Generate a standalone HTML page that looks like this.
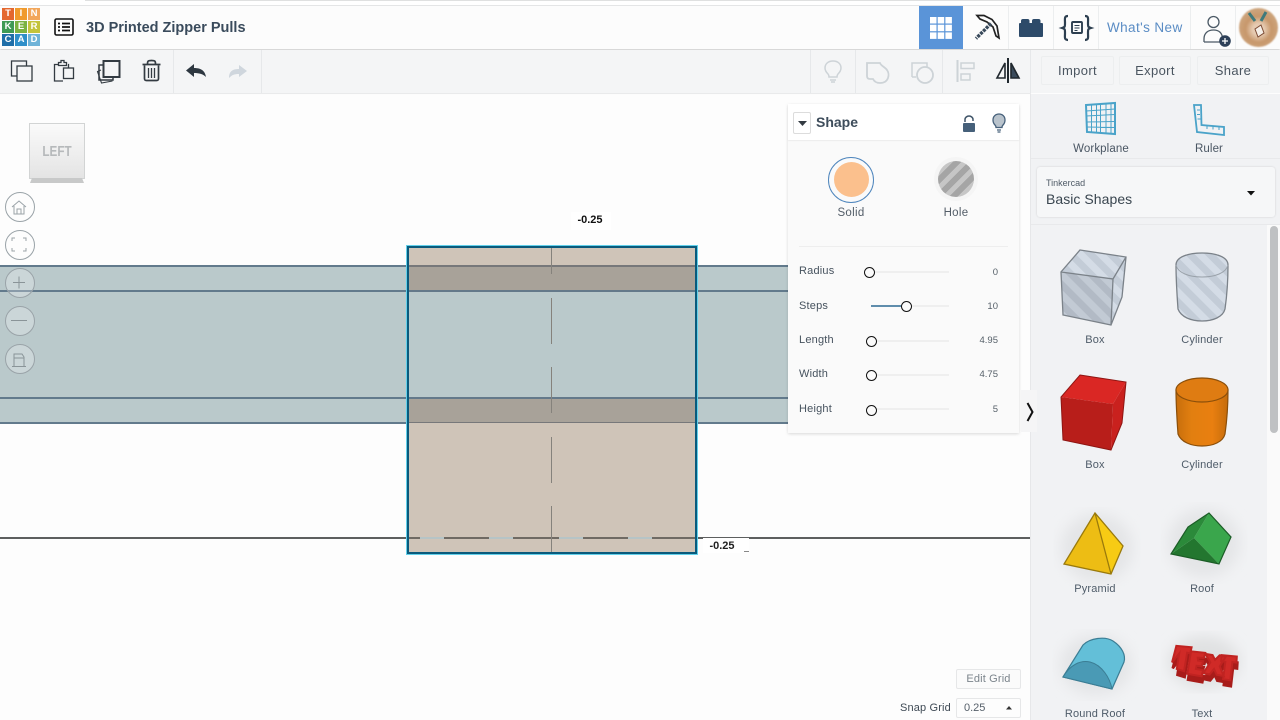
<!DOCTYPE html>
<html><head><meta charset="utf-8">
<style>
html,body{margin:0;padding:0;width:1280px;height:720px;overflow:hidden;background:#fdfdfd;font-family:"Liberation Sans",sans-serif;color:#3c4a58}
.a{position:absolute}
.t{position:absolute;white-space:nowrap;letter-spacing:0}
.c{transform:translateX(-50%)}
svg{position:absolute;overflow:visible}
.sep{position:absolute;width:1px;background:#e6e8ea}
.btn{position:absolute;top:56px;height:29px;background:#f4f5f6;border:1px solid #eceeef;border-radius:2px;box-sizing:border-box;text-align:center;font-size:13px;line-height:28px;color:#4a5560;letter-spacing:.35px}
.lg{position:absolute;width:12px;height:12px;color:#fff;font-size:9.500px;font-weight:bold;line-height:12px;text-align:center}
.track{position:absolute;height:2px;background:#efefef;left:871px;width:78px}
.knob{position:absolute;width:9px;height:9px;border:1.200px solid #111;border-radius:50%;background:#fbfbfb}
.lab{position:absolute;left:799px;font-size:11px;color:#46525e;letter-spacing:.2px}
.val{position:absolute;right:282px;font-size:9.500px;color:#555f68}
.rc{position:absolute;left:5px;width:28px;height:28px;border:1px solid #9aa3a8;border-radius:50%;background:rgba(255,255,255,.25)}
.sl{position:absolute;font-size:11px;color:#4f5c69;white-space:nowrap;transform:translateX(-50%);letter-spacing:.15px}
</style></head><body>
<!-- canvas -->
<div class="a" style="left:0;top:94px;width:1031px;height:626px;background:#fdfdfd"></div>
<div class="a" style="left:0;top:266px;width:790px;height:157px;background:#bac9cb"></div>
<div class="a" style="left:0;top:265px;width:790px;height:2px;background:#627a8c"></div>
<div class="a" style="left:0;top:290px;width:790px;height:2px;background:#627a8c"></div>
<div class="a" style="left:0;top:397px;width:790px;height:2px;background:#627a8c"></div>
<div class="a" style="left:0;top:422px;width:790px;height:2px;background:#627a8c"></div>
<div class="a" style="left:0;top:537px;width:1030px;height:2px;background:#5d5f5f"></div>
<!-- selected shape -->
<div class="a" style="left:408px;top:248px;width:288px;height:306px;background:#cfc4b8"></div>
<div class="a" style="left:408px;top:291px;width:288px;height:107px;background:#bac9cb"></div>
<div class="a" style="left:408px;top:266px;width:288px;height:25px;background:#a8a299"></div>
<div class="a" style="left:408px;top:398px;width:288px;height:25px;background:#a8a299"></div>
<div class="a" style="left:408px;top:265px;width:288px;height:2px;background:#77787a"></div>
<div class="a" style="left:408px;top:290px;width:288px;height:2px;background:#64798a"></div>
<div class="a" style="left:408px;top:397px;width:288px;height:2px;background:#64798a"></div>
<div class="a" style="left:408px;top:422px;width:288px;height:1px;background:#77787a"></div>
<div class="a" style="left:408px;top:537px;width:288px;height:2px;background:#6f6a63"></div>
<div class="a" style="left:420px;top:537px;width:24px;height:2px;background:#b6c4c6"></div>
<div class="a" style="left:489px;top:537px;width:24px;height:2px;background:#b6c4c6"></div>
<div class="a" style="left:559px;top:537px;width:24px;height:2px;background:#b6c4c6"></div>
<div class="a" style="left:628px;top:537px;width:24px;height:2px;background:#b6c4c6"></div>
<svg style="left:0;top:0" width="1280" height="720">
<path d="M551.500 248V274M551.500 298V344M551.500 367V413M551.500 437V483M551.500 506V554" stroke="#85827c" stroke-width="1" fill="none"/>
</svg>
<div class="a" style="left:407px;top:246px;width:286px;height:304px;border:2px solid #0a5a7c;box-shadow:0 0 0 1px #62d0ea"></div>
<div class="a" style="left:571px;top:212px;width:40px;height:18px;background:#fff"></div>
<div class="t c" style="left:590px;top:214px;font-size:11px;font-weight:bold;color:#111">-0.25</div>
<div class="a" style="left:703px;top:538px;width:46px;height:15px;background:#fff"></div>
<div class="t c" style="left:722px;top:540px;font-size:11px;font-weight:bold;color:#222">-0.25</div>
<div class="a" style="left:744px;top:551px;width:5px;height:1px;background:#888"></div>

<!-- view cube -->
<div class="a" style="left:29px;top:123px;width:56px;height:56px;background:linear-gradient(#fafafa,#e4e4e4);border:1px solid #d2d4d4;box-sizing:border-box"></div>
<svg style="left:29px;top:178px" width="56" height="6"><path d="M3 0h50l2 5H1z" fill="#c8c9c9"/></svg>
<div class="t c" style="left:57px;top:143px;font-size:15px;font-weight:bold;color:#b6b9bb;transform:translateX(-50%) scaleX(.78)">LEFT</div>
<div class="rc" style="top:192px"></div><div class="rc" style="top:230px"></div><div class="rc" style="top:268px"></div><div class="rc" style="top:306px"></div><div class="rc" style="top:344px"></div>
<svg style="left:0;top:0" width="60" height="380" fill="none" stroke="#9aa3a8" stroke-width="1">
<path d="M12 207l7-6 7 6M14 206v8h10v-8M17 214v-5h4v5"/>
<path d="M12 241v-3h3M23 238h3v3M12 248v3h3M23 251h3v-3"/>
<path d="M13 282.500h12M19 276.500v12" stroke="#8a9498"/>
<path d="M11 320.500h16" stroke="#8a9498"/>
<path d="M12 366.500h14M14 366v-12h8l2 3v9M14 358h10" stroke="#8a9498"/>
</svg>

<!-- top nav -->
<div class="a" style="left:0;top:0;width:1280px;height:6px;background:#fff"></div>
<div class="a" style="left:85px;top:0;width:1195px;height:1px;background:#dfe0e0"></div>
<div class="a" style="left:0;top:5px;width:1280px;height:1px;background:#e8e9ea"></div>
<div class="a" style="left:0;top:6px;width:1280px;height:43px;background:#fcfcfc;box-shadow:0 1px 2px rgba(0,0,0,.22)"></div>
<div class="lg" style="left:2px;top:8px;background:#e4672e">T</div><div class="lg" style="left:15px;top:8px;background:#f09a2c">I</div><div class="lg" style="left:28px;top:8px;background:#f2a65a">N</div>
<div class="lg" style="left:2px;top:21px;background:#3f9a55">K</div><div class="lg" style="left:15px;top:21px;background:#7cb342">E</div><div class="lg" style="left:28px;top:21px;background:#c4c43c">R</div>
<div class="lg" style="left:2px;top:34px;background:#1f6ea8">C</div><div class="lg" style="left:15px;top:34px;background:#2f8fc9">A</div><div class="lg" style="left:28px;top:34px;background:#6fb3d8">D</div>
<svg style="left:54px;top:18px" width="20" height="18" fill="none" stroke="#111"><rect x="1" y="1" width="18" height="16" rx="1.500" stroke-width="1.600"/><path d="M4 5.500h2M8 5.500h8M4 9h2M8 9h8M4 12.500h2M8 12.500h8" stroke-width="1.800"/></svg>
<div class="t" style="left:86px;top:20px;font-size:14.500px;font-weight:bold;color:#3a4b5c">3D Printed Zipper Pulls</div>

<div class="a" style="left:919px;top:6px;width:44px;height:43px;background:#5a94d8"></div>
<svg style="left:930px;top:17px" width="22" height="22" fill="#fff"><rect width="6.500" height="6.500"/><rect x="7.700" width="6.500" height="6.500"/><rect x="15.400" width="6.500" height="6.500"/><rect y="7.700" width="6.500" height="6.500"/><rect x="7.700" y="7.700" width="6.500" height="6.500"/><rect x="15.400" y="7.700" width="6.500" height="6.500"/><rect y="15.400" width="6.500" height="6.500"/><rect x="7.700" y="15.400" width="6.500" height="6.500"/><rect x="15.400" y="15.400" width="6.500" height="6.500"/></svg>
<svg style="left:972px;top:14px" width="30" height="28" fill="none" stroke="#222"><path d="M5 1.500h7l8 4 5 6.500 2 12-3-2-3-9-6-5-7-3z" stroke-width="1.700"/><path d="M19 9.500L4 24.500" stroke="#3a4b5c" stroke-width="3.400" stroke-dasharray="3 1"/></svg>
<svg style="left:1019px;top:19px" width="24" height="18" fill="#2d4a69"><rect x="0" y="4" width="24" height="14" rx="1"/><rect x="2" y="0" width="8.500" height="6" rx="2"/><rect x="13" y="0" width="8.500" height="6" rx="2"/></svg>
<svg style="left:1061px;top:15px" width="31" height="26" fill="none" stroke="#2d3f50" stroke-width="2.200"><path d="M7 1C3 1 4 4 4 8s0 4-3 5c3 1 3 1 3 5s-1 7 3 7M24 1c4 0 3 3 3 7s0 4 3 5c-3 1-3 1-3 5s1 7-3 7"/><rect x="11" y="7" width="10" height="11" rx="1" stroke-width="1.900"/><path d="M13.500 10.500h5M13.500 13h5M13.500 15.500h3" stroke-width="1"/></svg>
<div class="t" style="left:1107px;top:20px;font-size:13.500px;color:#5a8cc4;letter-spacing:.4px">What's New</div>
<svg style="left:1202px;top:15px" width="32" height="32" fill="none" stroke="#4c5a66" stroke-width="1.300"><circle cx="11.500" cy="7" r="5.500"/><path d="M2 27v-3c0-6 4-9 9.500-9s9 3 9 9v1M2 27h17"/><circle cx="23" cy="26" r="5.800" fill="#2d4058" stroke="none"/><path d="M20 26h6M23 23v6" stroke="#fff"/></svg>
<div class="a" style="left:1239px;top:8px;width:39px;height:39px;border-radius:50%;filter:blur(.7px);background:radial-gradient(circle at 50% 55%,#e6cbb2 0 20%,#c7976b 45%,#cfa983 78%,#dcc2a4 100%)"></div>
<svg style="left:1239px;top:8px" width="39" height="39" fill="none"><path d="M10 5l6 8M27 4l-5 9" stroke="#3f7a7c" stroke-width="3"/><path d="M16 21l6-4 3 8-6 4z" fill="#f5efe8" stroke="#7b4a33"/></svg>
<div class="sep" style="left:1008px;top:6px;height:43px;background:#eceeef"></div>
<div class="sep" style="left:1053px;top:6px;height:43px;background:#eceeef"></div>
<div class="sep" style="left:1098px;top:6px;height:43px;background:#eceeef"></div>
<div class="sep" style="left:1190px;top:6px;height:43px;background:#eceeef"></div>
<div class="sep" style="left:1235px;top:6px;height:43px;background:#eceeef"></div>

<!-- toolbar -->
<div class="a" style="left:0;top:50px;width:1031px;height:43px;background:#f4f5f6;box-shadow:0 1px 1px rgba(0,0,0,.04)"></div>
<div class="a" style="left:1031px;top:50px;width:249px;height:43px;background:#f4f5f6"></div>
<div class="a" style="left:0;top:93px;width:1031px;height:1px;background:#e9eaeb"></div>
<div class="sep" style="left:173px;top:50px;height:43px"></div>
<div class="sep" style="left:261px;top:50px;height:43px"></div>
<div class="sep" style="left:810px;top:50px;height:43px"></div>
<div class="sep" style="left:855px;top:50px;height:43px"></div>
<div class="sep" style="left:942px;top:50px;height:43px"></div>
<div class="sep" style="left:1030px;top:50px;height:43px"></div>
<svg style="left:0;top:50px" width="270" height="43" fill="none" stroke="#333b42" stroke-width="1.300">
<path d="M17 26H11.500V11h15v5"/><rect x="17" y="16" width="15" height="15"/>
<path d="M63 31H54.500V14.500H58M68 14.500h.500V18"/><path d="M58.500 15.500v-3h2.500v-2h3v2h2.500v3z"/><rect x="63.500" y="18" width="10" height="10.500"/>
<path d="M101 20l-3.500 1.500 4 11.500 11-2" stroke-width="1.100"/><rect x="103.500" y="11" width="16" height="16" stroke-width="2"/><path d="M103 15h-4v15h14v-3" stroke-width="1.500"/>
<path d="M142.500 14.500h18M147.500 14c0-3 .5-3.500 4-3.500s4 .5 4 3.500M144.500 15.500v13c0 1.500.5 2 2 2h10c1.500 0 2-.5 2-2v-13" stroke-width="1.700"/><path d="M148.500 18v10M151.500 18v10M154.500 18v10"/>
</svg>
<svg style="left:186px;top:64px" width="21" height="14"><path d="M0 6.500L8 0v4c6 0 11 2 12 9-3-3-7-4-12-4v4z" fill="#2d3740"/></svg>
<svg style="left:229px;top:65px" width="20" height="14"><path d="M18 6L10 0v4C4 4 0 6 0 13c3-3 5-4 10-4v3z" fill="#cfd6dd"/></svg>
<svg style="left:810px;top:50px" width="220" height="43" fill="none" stroke="#cdd3d7" stroke-width="1.500">
<path d="M18 25c-2-2-3-4-3-6 0-4 3-7 8-7s8 3 8 7c0 2-1 4-3 6-1 1-1 2-1 3h-8c0-1 0-2-1-3zM20 31h6M21 33h4" transform="translate(0 -1)"/>
<path d="M57 13h13c1 3 5 4 7 7 3 4 2 13-7 13-4 0-6-2-7-4H60c-2 0-3-1-3-3z" stroke-width="1.800"/>
<path d="M102 27V13h15v4M102 27h4" stroke-width="1.500"/><circle cx="115" cy="25" r="8" stroke-width="1.800"/>
<path d="M147.500 10v22" stroke-width="2"/><rect x="151" y="13" width="13" height="5.500"/><rect x="151" y="24" width="9" height="6"/>
</svg>
<svg style="left:995px;top:58px" width="26" height="26" fill="none" stroke="#20282e" stroke-width="1.600"><path d="M13 0v25" stroke-width="2"/><path d="M10 5L2 20h8z"/><path d="M16 5l8 15h-8z" fill="#3a4b5c"/></svg>
<div class="btn" style="left:1041px;width:73px">Import</div>
<div class="btn" style="left:1119px;width:72px">Export</div>
<div class="btn" style="left:1197px;width:72px">Share</div>

<!-- inspector -->
<div class="a" style="left:788px;top:104px;width:231px;height:329px;background:#fafafa;box-shadow:0 1px 3px rgba(0,0,0,.15)"></div>
<div class="a" style="left:788px;top:104px;width:231px;height:36px;background:#fff;box-shadow:0 1px 1px rgba(0,0,0,.06)"></div>
<div class="a" style="left:793px;top:112px;width:18px;height:22px;border:1px solid #dcdcdc;border-radius:2px;box-sizing:border-box"></div>
<svg style="left:798px;top:121px" width="9" height="6"><path d="M0 0h9L4.500 5z" fill="#333b42"/></svg>
<div class="t" style="left:816px;top:114px;font-size:14px;font-weight:bold;color:#3e4d5b">Shape</div>
<svg style="left:962px;top:115px" width="14" height="17"><path d="M3 7V4.500C3 2.500 5 1 7 1s4 1.500 4 3.500V6" fill="none" stroke="#3f5468" stroke-width="1.500"/><rect x="1" y="8" width="12" height="9" rx="1" fill="#46607a"/></svg>
<svg style="left:992px;top:113px" width="14" height="20"><path d="M3 12C1.500 10.500 1 9 1 7c0-3.500 2.500-6 6-6s6 2.500 6 6c0 2-.5 3.500-2 5-.8.800-1 1.500-1 2.500H4c0-1-.2-1.700-1-2.500z" fill="#b9c3cc" stroke="#46607a" stroke-width="1.300"/><path d="M5 17h4M5.500 19h3" stroke="#46607a" stroke-width="1.200"/></svg>
<div class="a" style="left:828px;top:157px;width:46px;height:46px;border:1.600px solid #4f86bd;border-radius:50%;box-sizing:border-box"></div>
<div class="a" style="left:834px;top:162px;width:35px;height:35px;border-radius:50%;background:#fbc08d"></div>
<div class="a" style="left:934px;top:157px;width:44px;height:44px;border-radius:50%;background:#f5f5f5"></div>
<div class="a" style="left:938px;top:161px;width:36px;height:36px;border-radius:50%;background:repeating-linear-gradient(135deg,#a5a5a5 0 6px,#c6c6c6 6px 11px)"></div>
<div class="t c" style="left:851px;top:207px;font-size:11.500px;color:#535d68;letter-spacing:.3px">Solid</div>
<div class="t c" style="left:956px;top:207px;font-size:11.500px;color:#535d68;letter-spacing:.3px">Hole</div>
<div class="a" style="left:799px;top:246px;width:209px;height:1px;background:#eeeeee"></div>
<div class="lab" style="top:265px">Radius</div><div class="lab" style="top:300px">Steps</div><div class="lab" style="top:334px">Length</div><div class="lab" style="top:368px">Width</div><div class="lab" style="top:403px">Height</div>
<div class="val" style="top:267px">0</div><div class="val" style="top:301px">10</div><div class="val" style="top:335px">4.95</div><div class="val" style="top:369px">4.75</div><div class="val" style="top:404px">5</div>
<div class="track" style="top:271px"></div><div class="track" style="top:305px"></div><div class="track" style="top:340px"></div><div class="track" style="top:374px"></div><div class="track" style="top:408px"></div>
<div class="a" style="left:871px;top:305px;width:30px;height:2px;background:#5f8dac"></div>
<div class="knob" style="left:864px;top:267px"></div><div class="knob" style="left:901px;top:301px"></div><div class="knob" style="left:866px;top:336px"></div><div class="knob" style="left:866px;top:370px"></div><div class="knob" style="left:866px;top:405px"></div>

<!-- right panel -->
<div class="a" style="left:1031px;top:94px;width:249px;height:626px;background:#f1f2f4"></div>
<div class="a" style="left:1030px;top:94px;width:1px;height:626px;background:#e6e7e9"></div>
<div class="a" style="left:1267px;top:225px;width:13px;height:495px;background:#fafafa"></div>
<div class="a" style="left:1270px;top:226px;width:8px;height:207px;background:#bfc1c3;border-radius:4px"></div>
<div class="a" style="left:1031px;top:158px;width:249px;height:1px;background:#e8e9eb"></div>
<div class="a" style="left:1037px;top:167px;width:238px;height:50px;background:#f6f7f8;border-radius:3px;box-shadow:0 0 2px rgba(0,0,0,.14)"></div>
<div class="a" style="left:1031px;top:224px;width:249px;height:1px;background:#e8e9eb"></div>
<div class="a" style="left:1021px;top:390px;width:16px;height:42px;background:#f5f5f6"></div>
<svg style="left:1026px;top:402px" width="9" height="20"><path d="M1.500 1l5 9-5 9" fill="none" stroke="#111" stroke-width="2"/></svg>
<svg style="left:1085px;top:103px" width="32" height="32" fill="none" stroke="#4aa3c9" stroke-width="1"><path d="M1 2l29-2v31L2 29z" stroke-width="2"/><path d="M6.500 2v27.500M11.500 1.500v28M15.500 1v29M21 1v29.500M26 .5v30M1 8l29-2M1 13l29-1.500M1.500 19l28.500-.5M1.500 24l28.500 .5" /></svg>
<svg style="left:1193px;top:104px" width="33" height="32" fill="none" stroke="#4aa3c9" stroke-width="1.800"><path d="M1 1h7l.500 20 22.500 2v8L4 28z"/><path d="M4 6h3M4 10.500h3M4.500 15h3M14 22v3M20 22.500v3M26 23v3" stroke-width="1"/></svg>
<div class="t c" style="left:1101px;top:143px;font-size:11.500px;color:#4a5663;letter-spacing:.1px">Workplane</div>
<div class="t c" style="left:1209px;top:143px;font-size:11.500px;color:#4a5663;letter-spacing:.1px">Ruler</div>
<div class="t" style="left:1046px;top:178px;font-size:9px;color:#4e5a66">Tinkercad</div>
<div class="t" style="left:1046px;top:191px;font-size:14px;color:#39454f;letter-spacing:.05px">Basic Shapes</div>
<svg style="left:1247px;top:191px" width="8" height="5"><path d="M0 0h8L4 4.500z" fill="#111"/></svg>

<svg style="left:0;top:0" width="1280" height="720">
<defs>
<pattern id="st" width="14" height="14" patternUnits="userSpaceOnUse" patternTransform="rotate(-45)"><rect width="14" height="14" fill="#c2cad4"/><rect width="7" height="14" fill="#b2bac5"/></pattern>
<pattern id="st2" width="14" height="14" patternUnits="userSpaceOnUse" patternTransform="rotate(-45)"><rect width="14" height="14" fill="#d4dce6"/><rect width="7" height="14" fill="#c3ccd7"/></pattern>
<linearGradient id="og" x1="0" x2="1"><stop offset="0" stop-color="#c76e0c"/><stop offset=".3" stop-color="#e27f10"/><stop offset=".7" stop-color="#e97f10"/><stop offset="1" stop-color="#c56c0b"/></linearGradient>
<filter id="bl"><feGaussianBlur stdDeviation="7"/></filter>
</defs>
<!-- grey box -->
<path d="M1080 250l46 7-13 22-52-7z" fill="url(#st2)"/>
<path d="M1061 272l52 7-2 46-48-10z" fill="url(#st)"/>
<path d="M1113 279l13-22-4 40-11 28z" fill="url(#st2)"/>
<path d="M1080 250l46 7-4 40-11 28-48-10-2-43zM1061 272l52 7-2 46M1113 279l13-22" fill="none" stroke="#7b8289" stroke-width="1.300"/>
<!-- grey cylinder -->
<path d="M1176 265c0 15 1 30 2 44 3 8 13 12 24 12s21-4 23-12c2-14 3-29 3-44z" fill="url(#st2)"/>
<ellipse cx="1202" cy="265" rx="26" ry="12" fill="url(#st2)"/>
<path d="M1176 265c0-8 12-12 26-12s26 4 26 12c0 15-1 30-3 44-2 8-12 12-23 12s-21-4-24-12c-1-14-2-29-2-44z" fill="none" stroke="#7b8289" stroke-width="1.300"/>
<path d="M1176 265c2 8 13 12 26 12s24-4 26-12" fill="none" stroke="#9aa2aa" stroke-width="1"/>
<!-- red box -->
<path d="M1080 375l46 7-13 22-52-7z" fill="#da2724"/>
<path d="M1061 397l52 7-2 46-48-10z" fill="#b81e1a"/>
<path d="M1113 404l13-22-4 41-11 27z" fill="#c9211e"/>
<path d="M1080 375l46 7-4 41-11 27-48-10-2-43z" fill="none" stroke="#8e1512" stroke-width="1"/>
<!-- orange cylinder -->
<path d="M1176 390c0 15 1 30 2 44 3 8 13 12 24 12s21-4 23-12c2-14 3-29 3-44z" fill="url(#og)" stroke="#8b4f0a" stroke-width="1.200"/>
<ellipse cx="1202" cy="390" rx="26" ry="12" fill="#df7c12" stroke="#8b4f0a" stroke-width="1.200"/>
<!-- pyramid -->
<ellipse cx="1097" cy="548" rx="36" ry="34" fill="#e4e5e7" filter="url(#bl)"/>
<path d="M1095 513l-31 51 47 10z" fill="#edbd14"/>
<path d="M1095 513l28 33-12 28z" fill="#f7cb14"/>
<path d="M1095 513l-31 51 47 10 12-28zM1095 513l16 61" fill="none" stroke="#9a7a0c" stroke-width="1.300"/>
<!-- roof -->
<ellipse cx="1204" cy="543" rx="36" ry="34" fill="#e4e5e7" filter="url(#bl)"/>
<path d="M1209 513l22 24-12 27-25-26z" fill="#3aa64c"/>
<path d="M1194 538l25 26-48-10z" fill="#23762f"/>
<path d="M1209 513l-15 25-23 16 17-27z" fill="#2b8a3a"/>
<path d="M1209 513l22 24-12 27-48-10 17-27z" fill="none" stroke="#1b5c26" stroke-width="1.200"/>
<!-- round roof -->
<ellipse cx="1096" cy="665" rx="36" ry="30" fill="#e4e5e7" filter="url(#bl)"/>
<path d="M1063 677L1083 645C1090 638 1105 636 1113 641C1122 647 1126 655 1124 662L1112 689z" fill="#63bfd8" stroke="#3b7d94" stroke-width="1.200"/>
<path d="M1063 677C1070 665 1080 660 1090 662C1102 665 1110 678 1112 689z" fill="#4a9ab5" stroke="#3b7d94" stroke-width="1"/>
<!-- text shape -->
<ellipse cx="1204" cy="662" rx="36" ry="26" fill="#e0e1e2" filter="url(#bl)"/>
<g transform="rotate(-6 1204 660)">
<path transform="translate(0 6)" d="M1178 643l15 3-2 6-3-1-5 18-7-3 4-15-8 8zM1192 650l14 3-2 5-6-1 0 3 5 1-2 5-5-1-1 3 7 2-2 6-14-4zM1206 654l7 2 2 5 5-4 6 2-7 9 3 10-7-2-2-6-5 5-6-2 8-10zM1222 657l15 3-1 6-4-1-4 18-7-2 4-17-4-1z" fill="#a81c1a" stroke="#a81c1a" stroke-width="2.500"/>
<path d="M1178 643l15 3-2 6-3-1-5 18-7-3 4-15-8 8zM1192 650l14 3-2 5-6-1 0 3 5 1-2 5-5-1-1 3 7 2-2 6-14-4zM1206 654l7 2 2 5 5-4 6 2-7 9 3 10-7-2-2-6-5 5-6-2 8-10zM1222 657l15 3-1 6-4-1-4 18-7-2 4-17-4-1z" fill="#d02a27" stroke="#c02321" stroke-width="2"/>
</g>
</svg>
<div class="sl" style="left:1095px;top:334px">Box</div><div class="sl" style="left:1202px;top:334px">Cylinder</div>
<div class="sl" style="left:1095px;top:459px">Box</div><div class="sl" style="left:1202px;top:459px">Cylinder</div>
<div class="sl" style="left:1095px;top:583px">Pyramid</div><div class="sl" style="left:1202px;top:583px">Roof</div>
<div class="sl" style="left:1095px;top:708px">Round Roof</div><div class="sl" style="left:1202px;top:708px">Text</div>

<!-- grid controls -->
<div class="a" style="left:956px;top:669px;width:65px;height:20px;border:1px solid #e6e7e8;box-sizing:border-box;border-radius:2px;background:#fbfbfb;text-align:center;font-size:11px;line-height:18px;color:#7b848b;letter-spacing:.15px">Edit Grid</div>
<div class="t" style="left:900px;top:702px;font-size:11px;color:#3f4a55;letter-spacing:.15px">Snap Grid</div>
<div class="a" style="left:956px;top:698px;width:65px;height:20px;border:1px solid #e6e7e8;box-sizing:border-box;border-radius:2px;background:#fdfdfd;font-size:11px;line-height:18px;color:#56606a;padding-left:7px">0.25</div>
<svg style="left:1006px;top:706px" width="6" height="4"><path d="M0 3.500h6L3 0z" fill="#333"/></svg>
</body></html>
